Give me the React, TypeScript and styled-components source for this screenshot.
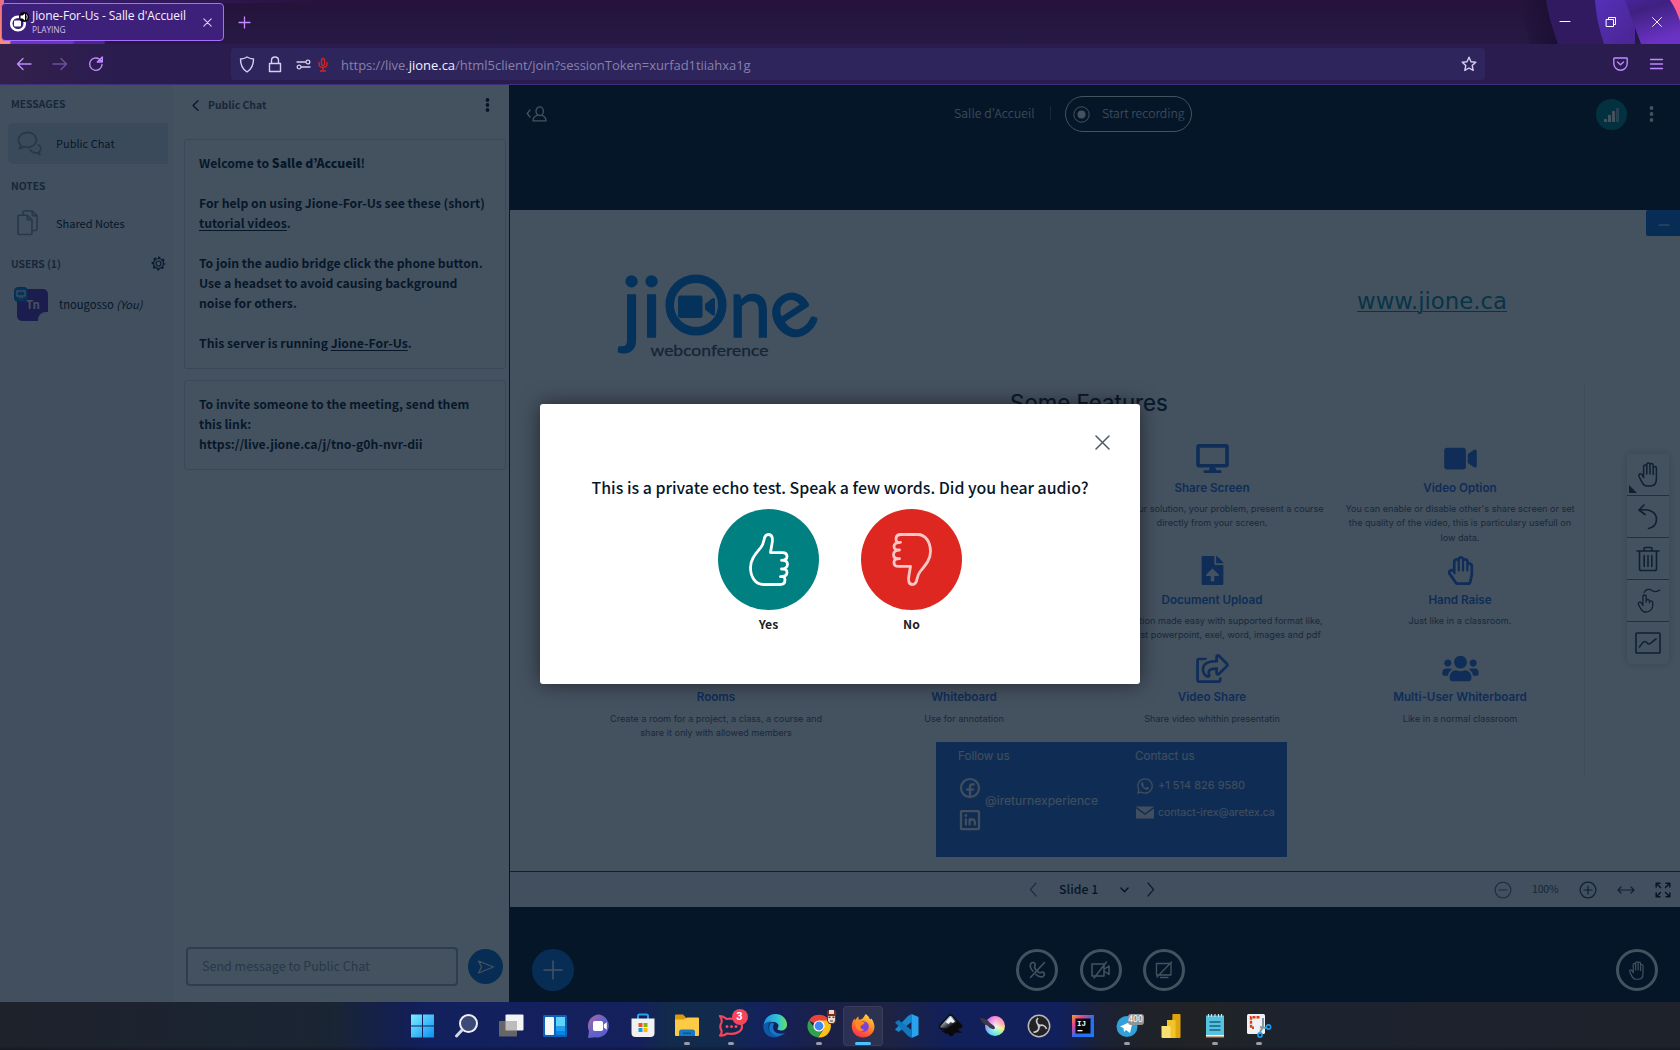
import React from "react";
import styled, { createGlobalStyle, css } from "styled-components";
import { FaDesktop, FaVideo, FaFileUpload, FaRegHandPaper, FaRegShareSquare, FaUsers, FaWhatsapp } from "react-icons/fa";
import { PiHandPointing, PiFacebookLogoBold, PiLinkedinLogoBold } from "react-icons/pi";

const chrome = '"Open Sans", "Noto Sans", sans-serif';
const ui = '"Noto Sans CJK JP", "Noto Sans", sans-serif';
const inter = 'Inter, "Liberation Sans", sans-serif';

const Global = createGlobalStyle`
  * { box-sizing: border-box; }
  html, body { margin: 0; padding: 0; overflow: hidden; background: #06172a; }
  svg { display: block; flex: none; overflow: visible; }
`;

const Screen = styled.div`
  width: 1680px; height: 1050px; overflow: hidden;
  display: grid; grid-template-rows: 44px 41px 917px 48px;
  font-family: ${ui};
`;

/* ---------- browser chrome ---------- */
const TabStrip = styled.div`
  position: relative; display: flex; align-items: flex-start; padding: 3px 0 0 1px;
  background:
    linear-gradient(100deg, #ff8a72 0 11px, #6a35c8 13px 73px, #4a2795 76px 104px, transparent 106px) 0 100% / 140px 12px no-repeat,
    linear-gradient(#ee6f7d, #ff8a72) 0 0 / 4px 41px no-repeat,
    linear-gradient(90deg, #3d1e7a, transparent) 0 0 / 330px 3px no-repeat,
    linear-gradient(#26123a, #251a45);
`;
const StripArt = styled.svg`position: absolute; right: 0; top: 0;`;
const Tab = styled.div`
  width: 223px; height: 38px; display: flex; align-items: center; padding: 0 11px 0 7px;
  background: #3d2079; border: 1px solid #a86dff; border-radius: 4px; color: #f4f0ff;
  font-family: ${chrome};
`;
const TabText = styled.div`
  flex: 1; margin-left: 3px; white-space: nowrap;
  font-size: 12px; line-height: 15px; letter-spacing: -0.09px;
  small { display: block; font-size: 8.4px; line-height: 13px; letter-spacing: -0.1px; color: #cdbff0; }
`;
const NewTab = styled.div`margin: 13px 0 0 14px;`;
const WindowControls = styled.div`
  position: relative; margin-left: auto; display: flex; margin-top: -3px;
`;
const WindowButton = styled.div`width: 46px; height: 44px; display: grid; place-items: center;`;

const NavBar = styled.div`
  display: flex; align-items: center; background: linear-gradient(90deg, #33204c, #2a1c4f 120px);
  border-bottom: 1px solid #40307a; padding-left: 6px; font-family: ${chrome};
`;
const NavButton = styled.div<{ $dim?: boolean }>`
  width: 36px; height: 32px; display: grid; place-items: center; opacity: ${p => (p.$dim ? 0.45 : 1)};
`;
const UrlField = styled.div`
  width: 1254px; height: 32px; margin-left: 117px; background: #2d255b; border-radius: 4px;
  display: flex; align-items: center; padding: 0 7px 0 7px; color: #8980ac;
  font-size: 13px; letter-spacing: -0.03px; white-space: pre;
  b { font-weight: 400; color: #f4f0ff; }
`;
const UrlIcon = styled.div<{ $w: number }>`width: ${p => p.$w}px; display: grid; place-items: center; color: #d8cef5;`;
const UrlText = styled.span`flex: 1; margin-left: 7px; padding-top: 2px;`;
const NavEnd = styled.div`margin-left: auto; margin-right: 6px; display: flex;`;

/* ---------- conference client ---------- */
const Client = styled.div`position: relative; display: grid; grid-template-columns: 173px 336px 1fr; min-height: 0;`;

const Sidebar = styled.aside`background: #f3f6f9; padding: 0 5px 0 8px; color: #06172a;`;
const SectionTitle = styled.div<{ $mt: number }>`
  margin-top: ${p => p.$mt}px; padding: 0 2px 0 3px; height: 18px; display: flex; justify-content: space-between; align-items: center;
  font-size: 10.3px; font-weight: 700; color: #4e5a66;
`;
const SideItem = styled.div<{ $active?: boolean; $mt: number }>`
  margin-top: ${p => p.$mt}px; height: 41px; display: flex; align-items: center; padding-left: 9px;
  border-radius: 5px 0 0 5px; font-size: 11px; font-weight: 400;
  ${p => p.$active && css`background: #dce4ed;`}
  svg { margin-right: 14px; }
  span { padding-bottom: 2px; }
`;
const UserRow = styled.div`
  height: 41px; margin-top: 12px; display: flex; align-items: center; padding-left: 9px; font-size: 11.2px;
  span { padding-bottom: 2px; }
  em { font-size: 11px; }
`;
const Avatar = styled.div`
  position: relative; width: 31px; height: 32px; margin-right: 11px; border-radius: 5px; background: #5a30b8;
  display: grid; place-items: center; color: #fff; font-size: 11.5px; font-weight: 700; padding: 0 0 2px 1px;
  &::after { content: ""; position: absolute; right: 0; bottom: 0; width: 10px; height: 9px; background: #f3f6f9; border-top-left-radius: 8px; }
`;
const PresenterBadge = styled.i`
  position: absolute; left: -3px; top: -2px; width: 14px; height: 15px; border-radius: 4px; background: #0f86e8;
  display: grid; place-items: center; border: 1px solid #0f70d7;
`;

const Chat = styled.section`background: #fff; display: flex; flex-direction: column; color: #06172a;`;
const ChatHeader = styled.div`
  height: 40px; display: flex; align-items: center; padding: 0 19px 0 19px; font-size: 10.4px; font-weight: 700; color: #4e5a66;
  span { flex: 1; margin-left: 9px; padding-bottom: 2px; }
`;
const Messages = styled.div`flex: 1; margin: 14px 3px 0 11px; display: flex; flex-direction: column; gap: 11px;`;
const Message = styled.div`
  border: 1px solid #d0dae4; border-radius: 3px; padding: 13px 14px 15px; background: #fff;
  font-size: 12.22px; line-height: 20px; font-weight: 700; white-space: nowrap; color: #0b1a28;
  u { text-underline-offset: 2px; }
  b { font-weight: 900; }
`;
const ChatForm = styled.div`display: flex; align-items: center; padding: 0 6px 16px 13px; gap: 10px;`;
const ChatInput = styled.div`
  width: 272px; height: 39px; border: 2px solid #a1aebc; border-radius: 4px; padding: 0 14px;
  font-size: 12.5px; line-height: 34px; color: #8b9aa8; background: #fff;
`;
const Round = styled.div<{ $size: number; $bg?: string; $ring?: boolean }>`
  width: ${p => p.$size}px; height: ${p => p.$size}px; border-radius: 50%; flex: none;
  display: grid; place-items: center; background: ${p => p.$bg || "transparent"};
  ${p => p.$ring && css`border: 3px solid #fff;`}
`;

const Main = styled.main`
  background: #06172a; border-left: 1px solid #06172a; min-width: 0; color: #fff;
  display: grid; grid-template-rows: 125px 661px 36px 95px;
`;
const TopBar = styled.header`
  height: 58px; display: flex; align-items: center; padding: 0 26px 0 16px; font-size: 12.3px; font-weight: 300;
`;
const MeetingTitle = styled.span`margin-left: 407px; margin-bottom: 2px; width: 96px; white-space: nowrap; letter-spacing: 0.1px;`;
const Divider = styled.i`width: 1px; height: 14px; background: #4e5a66; margin-right: 14px; margin-bottom: 2px;`;
const RecordButton = styled.div`
  width: 127px; height: 36px; border: 1px solid #fff; border-radius: 18px; display: flex; align-items: center;
  padding-left: 7px; white-space: nowrap;
  span { margin-left: 12px; padding-bottom: 2px; letter-spacing: 0.04px; }
`;
const TopEnd = styled.div`margin-left: auto; display: flex; align-items: center; gap: 22px;`;

const Presentation = styled.div`
  background: #fff; position: relative; color: #57606b; padding-left: 82px; font-family: ${inter};
`;
const MinimizeButton = styled.div`
  position: absolute; right: 0; top: 0; width: 34px; height: 26px; background: #0f70d7; border-radius: 2px 0 0 2px;
  display: grid; place-items: center; padding: 3px 0 0 2px;
`;
const SlideHeader = styled.div`height: 173px; width: 992px; display: flex; padding: 60px 77px 0 24px; justify-content: space-between;`;
const SiteLink = styled.a`font: 22.8px/30px "DejaVu Sans", sans-serif; color: #0a8f9b; text-decoration: underline; margin-top: 16px; text-underline-offset: 2px; text-decoration-thickness: 1px;`;
const Features = styled.div`width: 993px; height: 393px; border-right: 1px solid #e3e8ec;`;
const FeaturesTitle = styled.div`height: 38px; padding-left: 2px; line-height: 39px; text-align: center; font-size: 22.3px; font-weight: 400; color: #16202c; -webkit-text-stroke: 0.2px #16202c;`;
const FeatureGrid = styled.div`padding-top: 23px; display: grid; grid-template-columns: repeat(4, 248px); grid-template-rows: 112px 97.5px 100px;`;
const FeatureCell = styled.div`
  display: flex; flex-direction: column; align-items: center; text-align: center;
  font-size: 9.12px; line-height: 14.3px; white-space: nowrap;
`;
const FeatureIcon = styled.div`
  height: 29px; color: #2c70de; display: grid; place-items: center;
  svg { height: 29px; width: 37px; }
`;
const FeatureName = styled.div`font-size: 11.65px; line-height: 16px; font-weight: 600; color: #2c70de; margin: 6.5px 0 6.5px;`;
const Footer = styled.div`
  width: 351px; height: 115px; margin: -34px 0 0 344px; position: relative; background: #2f70d4; color: #eef2f6;
  display: grid; grid-template-columns: 177px 1fr; padding: 5px 0 0 22px; white-space: nowrap; align-items: start;
`;
const FooterTitle = styled.div<{ $h: number }>`font-size: 11.65px; line-height: 18px; height: ${p => p.$h}px;`;
const Social = styled.div`
  display: flex; align-items: center; font-size: 12.15px; gap: 3px;
  div { display: grid; gap: 8px; }
  span { padding-bottom: 7px; }
`;
const Contact = styled.div<{ $size: number }>`
  display: flex; align-items: center; gap: 3px; height: 27px; font-size: ${p => p.$size}px;
  svg { width: 20px; }
  span { padding-bottom: 1px; }
`;

const Tools = styled.div`
  position: absolute; right: 11px; top: 244px; width: 42px; height: 210px; background: #fff; border-radius: 5px;
  box-shadow: 0 0 8px rgba(0, 0, 0, 0.22); color: #2e3d4d;
`;
const Tool = styled.div`
  position: relative; height: 42px; display: grid; place-items: center;
  &:not(:last-child) { border-bottom: 1px solid #6d7c8b; }
`;
const Corner = styled.i`position: absolute; left: 2px; bottom: 2px; border-left: 8px solid #2e3d4d; border-top: 8px solid transparent;`;

const SlideBar = styled.div`
  background: #f3f6f9; border-top: 1px solid #35424f; color: #06172a; display: flex; align-items: center;
  padding: 0 9px 0 519px; font-size: 12.3px; font-weight: 500;
`;
const SlideLabel = styled.span`margin-left: 22px; width: 61px; padding-bottom: 2px;`;
const Zoom = styled.div`
  margin-left: auto; display: flex; align-items: center; color: #2e3d4d;
  span { font-size: 10.4px; font-weight: 400; width: 26px; margin: 0 21px 0 20px; padding-bottom: 2px; color: #4e5a66; letter-spacing: -0.1px; }
`;
const ActionBar = styled.div`display: grid; grid-template-columns: 484px auto 1fr; align-items: center; padding: 31px 22px 0; `;
const ActionGroup = styled.div<{ $end?: boolean }>`display: flex; gap: 21.5px; justify-content: ${p => (p.$end ? "flex-end" : "flex-start")};`;

const Overlay = styled.div`
  position: absolute; inset: 0; background: rgba(6, 23, 42, 0.75); display: flex; align-items: center; justify-content: center; padding-top: 1px;
`;
const Modal = styled.div`
  width: 600px; height: 280px; background: #fff; border-radius: 3px; box-shadow: 0 0 20px rgba(0, 0, 0, 0.5);
  display: flex; flex-direction: column; align-items: center; color: #06172a;
`;
const ModalHeader = styled.div`align-self: stretch; height: 72px; display: flex; justify-content: flex-end; padding: 31px 30.5px 0 0;`;
const Question = styled.h1`margin: 0; font-size: 15.9px; line-height: 24px; font-weight: 500; white-space: nowrap; color: #06172a;`;
const Answers = styled.div`display: flex; gap: 42px; margin-top: 9px;`;
const Answer = styled.div`
  display: flex; flex-direction: column; align-items: center; font-size: 12.2px; font-weight: 700; line-height: 20px; color: #222;
  span { margin-top: 4px; }
`;

/* ---------- taskbar ---------- */
const Taskbar = styled.div`
  display: flex; justify-content: center; padding-left: 1px;
  background:
    linear-gradient(transparent 44px, rgba(0, 0, 10, 0.3)),
    linear-gradient(90deg, #1e222b 0, #1c2431 200px, #1a2533 330px, #131f52 400px, #12205e 430px, #14215c 640px, #122a4b 668px,
      #122a4b 720px, #13225c 760px, #1b2046 830px, #1d2343 890px, #11205a 950px, #11205c 1060px, #1b2136 1100px, #1f2228 1150px, #212326 1210px, #1c232f 1290px, #1f222b 1680px);
`;
const TaskItem = styled.div<{ $state?: "running" | "active" }>`
  position: relative; width: 40px; height: 40px; margin: 4px 2px; border-radius: 4px; display: grid; place-items: center;
  ${p => p.$state === "active" && css`background: rgba(255, 255, 255, 0.07); box-shadow: inset 0 0 0 1px rgba(255, 255, 255, 0.06);`}
  ${p => p.$state && css`
    &::after {
      content: ""; position: absolute; bottom: 1px; left: 50%; transform: translateX(-50%); height: 3px; border-radius: 2px;
      width: ${p.$state === "active" ? 16 : 6}px; background: ${p.$state === "active" ? "#4cc2ff" : "#9a9ca6"};
    }`}
`;
const CountBadge = styled.span`
  position: absolute; right: 3px; top: 3px; width: 16px; height: 16px; border-radius: 50%; background: #f5455c; color: #fff;
  font: 700 11px/16px Roboto, sans-serif; text-align: center;
`;
const TagBadge = styled.span`
  position: absolute; right: 3px; top: 8px; width: 16px; height: 11px; border-radius: 3px; background: #8f9496; color: #fff;
  font: 400 8.5px/11px Roboto, sans-serif; text-align: center;
`;

const Line = ({ w, h, d, c = "currentColor", s = 1.3, vb }: { w: number; h: number; d: string; c?: string; s?: number; vb?: string }) => (
  <svg width={w} height={h} viewBox={vb || `0 0 ${w} ${h}`} fill="none" stroke={c} strokeWidth={s} strokeLinecap="round" strokeLinejoin="round"><path d={d} /></svg>
);
const Kebab = ({ c, h = 14 }: { c: string; h?: number }) => (
  <svg width="5" height={h} viewBox={`0 0 5 ${h}`} fill={c}><circle cx="2.5" cy="2" r="1.9" /><circle cx="2.5" cy={h / 2} r="1.9" /><circle cx="2.5" cy={h - 2} r="1.9" /></svg>
);
const Gear = () => (
  <svg width="15" height="15" viewBox="0 0 15 15" fill="none" stroke="#1c2b3b">
    <circle cx="7.5" cy="7.5" r="6.1" strokeWidth="1.600" strokeDasharray="2.300 2.490" strokeDashoffset="1.150" />
    <circle cx="7.5" cy="7.5" r="5" strokeWidth="1.200" />
    <circle cx="7.5" cy="7.5" r="2.5" strokeWidth="1.200" />
  </svg>
);
const Palm = ({ h }: { h: number }) => (
  <Line w={h * 0.84} h={h} vb="0 0 21 25" s={1.5} d="M5.600 15.500V4.700a1.600 1.600 0 0 1 3.200 0V12V2.600a1.600 1.600 0 0 1 3.200 0V12V3a1.600 1.600 0 0 1 3.200 0V12.500V6.200a1.600 1.600 0 0 1 3.200 0V17q0 7-6 7h-3.400q-3 0-4.500-2.800L1.200 14.800c-.7-1.500-.3-2.400.6-2.800 1-.4 1.800 0 2.400 1z" />
);
const Thumb = ({ down }: { down?: boolean }) => (
  <svg width="40" height="53" viewBox="0 0 40 53" fill="none" stroke="#fff" strokeOpacity={down ? 0.75 : 1} strokeWidth="2.8" strokeLinejoin="round" strokeLinecap="round">
    <path transform={down ? "rotate(180 20 26.5)" : undefined} d="M19.500 1.500c-3 0-4 2.200-4.500 5.500-.7 3.500-1.200 5-3.200 7.500C7 20.500 1.500 26 1.500 34.500c0 9 4.500 17 13 17H31c3.500 0 5-1.200 5-4.500 0-1.600-.5-2.800-1.500-3.300h-3c3 0 6.500-1 6.500-4.200 0-2-1.500-3.500-3-3.500h-2.500c3 0 6-1.500 6-4.500s-2-4.200-4.500-4.200h-1.500c2.500 0 5.500-1 5.500-3.700 0-2.600-1.800-4-4.500-4H21.500l1.600-9.300c.8-4.400.4-8.800-3.600-8.800Z" />
  </svg>
);
const Logo = () => (
  <svg width="202" height="92" viewBox="0 0 202 92" fill="#0482ee">
    <g fontFamily="Lato, sans-serif" fontSize="84" stroke="#0482ee" strokeWidth="1.6" textAnchor="middle">
      <text x="15.500" y="67">j</text>
      <text x="35.500" y="67">i</text>
      <text transform="translate(134 67) scale(0.9 1)">n</text>
      <text transform="translate(176.500 45) rotate(-33) translate(0 22)">e</text>
    </g>
    <circle cx="80" cy="35" r="26.300" fill="none" stroke="#0482ee" strokeWidth="8.600" />
    <rect x="62" y="25.500" width="24.500" height="22.500" rx="2.500" />
    <path d="M89 34l7-5.500q3-1.500 3 1v14.500q0 2.500-3 1l-7-5.500z" />
    <text x="93.500" y="86" textAnchor="middle" fontFamily="Lato, sans-serif" fontSize="15.500" textLength="118" lengthAdjust="spacingAndGlyphs" fill="#4a5058" stroke="#4a5058" strokeWidth="0.300">webconference</text>
  </svg>
);

const features: { icon?: React.ReactNode; name?: string; lines?: string[] }[] = [
  {}, {},
  { icon: <FaDesktop />, name: "Share Screen", lines: ["Share your solution, your problem, present a course", "directly from your screen."] },
  { icon: <FaVideo />, name: "Video Option", lines: ["You can enable or disable other's share screen or set", "the quality of the video, this is particulary usefull on", "low data."] },
  {}, {},
  { icon: <FaFileUpload />, name: "Document Upload", lines: ["Presentation made easy with supported format like,", "your latest powerpoint, exel, word, images and pdf"] },
  { icon: <FaRegHandPaper />, name: "Hand Raise", lines: ["Just like in a classroom."] },
  { name: "Rooms", lines: ["Create a room for a project, a class, a course and", "share it only with allowed members"] },
  { name: "Whiteboard", lines: ["Use for annotation"] },
  { icon: <FaRegShareSquare />, name: "Video Share", lines: ["Share video whithin presentatin"] },
  { icon: <FaUsers />, name: "Multi-User Whiterboard", lines: ["Like in a normal classroom"] },
];

const S = ({ children }: { children: React.ReactNode }) => <svg width="26" height="26" viewBox="0 0 26 26">{children}</svg>;

const ProfileBadge = styled.svg`position: absolute; right: 2px; top: 3px;`;
const KritaDisc = styled.div`
  width: 20px; height: 20px; border-radius: 50%; position: relative; margin: 0 0 0 1px;
  background: radial-gradient(circle, #ffffffcc, transparent 65%), conic-gradient(#f58bd0, #f9a0a8 70deg, #f5ee7a 110deg, #7ff0b0 150deg, #4ee0f5 200deg, #8a9cf5 260deg, #e070e8 320deg, #f58bd0);
  svg { position: absolute; left: -6px; top: 0; }
`;
const FaceBadge = () => (
  <ProfileBadge width="11" height="15" viewBox="0 0 11 15"><path fill="#7e2a22" d="M1 2q4.500-3 9 0v10l-2 3H3l-2-3z" /><path fill="#e5dccb" d="M3 1h5v4H3zM2 7h7v5l-1.500 2h-4L2 12z" /><path fill="#5b3b2c" d="M2.500 7.500h2v1.500h-2zM6.500 7.500h2v1.500h-2zM4 11.500h3v1H4z" /></ProfileBadge>
);
const KritaIcon = () => (
  <KritaDisc><svg width="20" height="18" viewBox="0 0 20 18"><path fill="#3a3a42" d="M1 2c4-.5 8 2 10 5 2.500 1.500 4.500 3 5 4.500 0 1.500-1.500 2-2.500 1.500-2-.5-4-2-5-3.500C5 8.500 2 5.500 1 2z" /></svg></KritaDisc>
);

const tasks: { icon: React.ReactNode; state?: "running" | "active"; badge?: React.ReactNode }[] = [
  { icon: <S><defs><linearGradient id="win" x2="1" y2="1"><stop stopColor="#7df0ff" /><stop offset="1" stopColor="#0a8ef5" /></linearGradient></defs><path fill="url(#win)" d="M1 1.500h11v11H1zM13 1.500h11v11H13zM1 13.500h11v11H1zM13 13.500h11v11H13z" /></S> },
  { icon: <S><circle cx="14.500" cy="10.500" r="8.500" fill="#3c4878" stroke="#eef0f6" strokeWidth="2" /><path d="M8.300 16.800L2.500 23" stroke="#d4d8e2" strokeWidth="3" strokeLinecap="round" /></S> },
  { icon: <S><rect x="7.500" y="1.500" width="18" height="16" rx="1" fill="#f4f4f4" /><rect x="1" y="8" width="18" height="15.500" rx="1" fill="#666" /><path d="M7.500 8h11.500v9.500H7.500z" fill="#bcbcbc" /></S> },
  { icon: <S><rect x="1" y="2" width="24" height="22" rx="1.500" fill="#0b63b8" /><rect x="3" y="4" width="9" height="18" rx="1" fill="#f6f6f6" /><path fill="#5fd3fb" d="M14 4h9v9.500h-9z" /><path fill="#1aa0f5" d="M14 14h9v4h-9z" /><path fill="#0a84e4" d="M14 18h9v4h-9z" /></S> },
  { icon: <S><defs><linearGradient id="tm" x2="1" y2="1"><stop stopColor="#b0699b" /><stop offset=".5" stopColor="#6463c9" /><stop offset="1" stopColor="#5a58cf" /></linearGradient></defs><path fill="url(#tm)" d="M13.500 1.500A11.500 11.500 0 1 1 9 24.200L2 25l1-7A11.500 11.500 0 0 1 13.500 1.500z" /><rect x="7" y="8" width="10" height="10" rx="1.800" fill="#fff" /><path fill="#fff" d="M17.800 11.500l3-2.200v7.400l-3-2.200z" /></S> },
  { icon: <S><path d="M8 6V3q0-1.500 1.500-1.500h7Q18 1.500 18 3v3" fill="none" stroke="#21a5ee" strokeWidth="2" /><path fill="#f1f1f1" d="M1.500 5.500h23V20q0 4-4 4h-15q-4 0-4-4z" /><path fill="#f25022" d="M8.500 10h4v4h-4z" /><path fill="#7fba00" d="M13.500 10h4v4h-4z" /><path fill="#00a4ef" d="M8.500 15h4v4h-4z" /><path fill="#ffb900" d="M13.500 15h4v4h-4z" /></S> },
  { state: "running", icon: <S><path fill="#d99a0b" d="M1 2.500q0-1 1-1h7l3 3v5H1z" /><path fill="#fdca45" d="M1 6.500h9l3-2h11q1 0 1 1V22q0 1-1 1H2q-1 0-1-1z" /><path fill="#1778c4" d="M5 23v-4q0-2.500 2.500-2.500h11Q21 16.500 21 19v4z" /><path fill="#0c5796" d="M9 19.500h8v1.500H9z" /></S> },
  { state: "running", badge: <CountBadge>3</CountBadge>, icon: <S><path fill="none" stroke="#f5455c" strokeWidth="2.200" strokeLinejoin="round" d="M2 3c3 0 5 1.500 6.500 3 8-1.500 15.500 2 15.500 7.500S16.500 22 9 20.500C7 22 4.500 22.800 2 22.500c1.500-1.500 2-3 1.500-5C2 15 2 12 3.500 9.500 4 7 3.500 5 2 3z" /><g fill="#f5455c"><circle cx="9" cy="13.500" r="1.500" /><circle cx="13.500" cy="13.500" r="1.500" /><circle cx="18" cy="13.500" r="1.500" /></g></S> },
  { icon: <S><defs><linearGradient id="ed" x2="1"><stop stopColor="#1b8ee0" /><stop offset=".6" stopColor="#2fc4d8" /><stop offset="1" stopColor="#6be064" /></linearGradient></defs><path fill="url(#ed)" d="M1.500 12C2.500 5 7.500 1 13.500 1 20 1 25 6 25 11.500c0 4-3 6-6 6-2 0-3.500-.7-3.500-1.700 0-.8 1-1.300 1-3 0-2-2-3.800-5-3.800-4 0-8 1-10 3z" /><path fill="#0c5aa8" d="M1.200 13C2 10 5.500 8.500 9 8.500c-2.500 2-3 4.500-2.300 7.500 1.500 5.500 7 8 12.800 6-7 5.500-18.500 1.500-18.300-9z" /><path fill="#1376cc" d="M9 10c-3 3-2.500 9 2.500 12 4 2 8 1 11.500-2-6 2-12-.5-12-6 0-1.500.5-2.500 1.500-3.200C11.500 10 10 9.700 9 10z" /></S> },
  { state: "running", badge: <FaceBadge />, icon: <S><path fill="#e8443a" d="M13 13L3 7.500A11.500 11.500 0 0 1 23 7.500z" /><path fill="#2fa14f" d="M3 7.200A11.500 11.500 0 0 0 12 24.500L17.500 15l-9 0z" /><path fill="#fbc116" d="M12 24.500A11.500 11.500 0 0 0 23.300 7.500H13l5 8z" /><circle cx="13" cy="13" r="5.600" fill="#fff" /><circle cx="13" cy="13" r="4.400" fill="#4285f4" /></S> },
  { state: "active", icon: <S><defs><linearGradient id="ff" x1=".7" x2=".2" y2="1"><stop stopColor="#ffd63d" /><stop offset=".5" stopColor="#ff7a26" /><stop offset="1" stopColor="#f5285c" /></linearGradient></defs><path fill="url(#ff)" d="M15.500 1c2 1 4 3.500 4.500 5.500l1.500-1c3 4.500 3.500 8 2.500 11.500-1.500 4.500-6 7.500-11 7.500C6.500 24.500 1.500 19.500 1.800 13c0-3 1-5.500 2.700-7.500l.5 2c1-2 2-3 3.500-4v3c1.500 0 3 .3 4.500-1.500 1-1.500 2-2.500 2.500-4z" /><circle cx="13.500" cy="13.500" r="5.300" fill="#7b42d6" /><path fill="#ff8b22" d="M5 9c2-2 5-1.500 6.500-.5 1.500.8 3 .3 3 1.500S11 12 10.500 13.500s1.500 3.500 4 3C12 19.500 5 18 5 9z" /></S> },
  { icon: <S><path fill="#1b86cf" d="M17.500 1v8L4.500 19 1 16.500 14 3z" /><path fill="#2aa3ee" d="M17.500 25l7-3V4l-7-3z" /><path fill="#1077bd" d="M1 9.500L4.500 7l13 10v8L14 23z" /></S> },
  { icon: <S><defs><linearGradient id="ink" x2=".7" y2="1"><stop stopColor="#dfe6f2" /><stop offset=".35" stopColor="#8b95a5" /><stop offset=".62" stopColor="#0a0a0a" /></linearGradient></defs><path fill="url(#ink)" stroke="#0a0a0a" strokeWidth="1.300" d="M12.500 2q1.200 0 2 1l9 9.500c1.500 2-1 2.500-3.500 2.500-2 0-1.500 1.500 0 2 1 .5 1.500 1.500 0 2h-3.500c-.5 1-1 3.500-3 3.500s-3-1-2-2.500H8c-2-.5-2-2 0-2.500 1-.5 0-1.500-2.500-1.500-3 0-5-1.500-3.500-3.500L10.500 3q.8-1 2-1z" /><path fill="#eef3fb" d="M12.500 3.500l4.500 5-2 1.500-2.500-1-2 2-3-2z" /><path fill="#0a0a0a" d="M21 18.500h2.500v1.200H21zM4 17.500h2v1.200H4z" /></S> },
  { icon: <KritaIcon /> },
  { icon: <S><circle cx="13" cy="13" r="10.700" fill="#232326" stroke="#b9b9bd" strokeWidth="1.500" /><path d="M12 5c-2.500 2.500-1.500 6 1.500 7.500M20.500 16c-1-3-4-4.500-7-3.500M7.500 19c3.500.5 6-2 5.500-6.500" fill="none" stroke="#c9c9cc" strokeWidth="1.700" /><circle cx="13" cy="13" r="1.500" fill="#c9c9cc" /></S> },
  { icon: <S><defs><linearGradient id="ij" x2="1" y2="1"><stop stopColor="#f5a02b" /><stop offset=".25" stopColor="#e8458b" /><stop offset=".55" stopColor="#2a6cf0" /><stop offset="1" stopColor="#1a7cf5" /></linearGradient></defs><rect x="2" y="2" width="22" height="22" fill="url(#ij)" /><rect x="5.500" y="5.500" width="15" height="15" fill="#050508" /><text x="7" y="13" fontSize="7.500" fontWeight="700" fontFamily="Liberation Mono, monospace" fill="#fff">IJ</text><path fill="#fff" d="M7.500 17h5v1.300h-5z" /></S> },
  { state: "running", badge: <TagBadge>400</TagBadge>, icon: <S><circle cx="13" cy="13.500" r="10.500" fill="#2fa2dc" /><path fill="#fff" d="M6 13.500l13-6-3 12.500-4-3-2 2-.5-4z" /></S> },
  { icon: <S><path fill="#e0a50c" d="M14.500 1h7q1 0 1 1v22q0 1-1 1h-8z" /><path fill="#f2c42c" d="M9 7h7.500q1 0 1 1v17H9z" /><path fill="#fae06f" d="M3.500 13h8q1 0 1 1v11h-8q-1 0-1-1z" /></S> },
  { state: "running", icon: <S><path fill="#57c2dd" d="M4 2.500h18V22H4z" /><path fill="#fff" d="M4 22h18v2H4z" /><path fill="#a3511e" d="M4 23.500h18V25H4z" /><path stroke="#126387" strokeWidth="1.500" d="M7.500 9h11M7.500 13h11M7.500 17h11" /><path stroke="#bfe9f4" strokeWidth="1.200" d="M6.500 1v3M9.500 1v3M13 1v3M16.500 1v3M19.500 1v3" /></S> },
  { state: "running", icon: <S><rect x="1" y="1" width="18" height="20" rx="1.500" fill="#eef2f5" /><path fill="none" stroke="#d8401a" strokeWidth="2.400" strokeDasharray="3 1" d="M13.500 4.200H5v10.500h3" /><path d="M17 5v9l-3 5M14 14l6 1" stroke="#8c949c" strokeWidth="2" fill="none" /><circle cx="22.500" cy="14" r="2.100" fill="none" stroke="#1b9cf0" strokeWidth="1.600" /><circle cx="14" cy="22" r="2.100" fill="none" stroke="#1b9cf0" strokeWidth="1.600" /></S> },
];

const PointerIcon = styled.div`
  width: 26px; height: 26px; display: grid; align-items: end;
  svg { grid-area: 1 / 1; }
  svg:last-child { align-self: start; margin-left: 8px; }
`;
const NextWrap = styled.div`margin-left: 18px;`;
const FitWrap = styled.div`margin: 0 20px 0 20px;`;

export default function App() {
  return (
    <Screen>
      <Global />
      <TabStrip>
        <StripArt width="170" height="44" viewBox="0 0 170 44">
          <defs>
            <linearGradient id="sh"><stop stopColor="#1a0d30" stopOpacity="0" /><stop offset="1" stopColor="#1c0f33" /></linearGradient>
            <linearGradient id="p3" x2="0.400" y2="1"><stop stopColor="#47249a" /><stop offset="0.300" stopColor="#3f2180" /><stop offset="1" stopColor="#6a32c4" /></linearGradient>
            <linearGradient id="p2" y2="1"><stop stopColor="#5430b8" /><stop offset="1" stopColor="#4a2592" /></linearGradient>
          </defs>
          <path fill="url(#sh)" d="M8 0h28l12 44H20z" />
          <path fill="#321a60" d="M36 0h60v44H48Q39 20 36 0z" />
          <path fill="url(#p2)" d="M85 0h40v44H94Q86 20 85 0z" />
          <path fill="url(#p3)" d="M115 0h55v44h-39z" />
          <path fill="#ff5f8f" d="M160 0h10v21q-4-12-10-21z" />
        </StripArt>
        <Tab>
          <svg width="20" height="22" viewBox="0 0 20 22"><circle cx="9" cy="12.500" r="6.800" fill="none" stroke="#fff" strokeWidth="2.600" /><rect x="5" y="9.500" width="7" height="6" rx="1" fill="#fff" /><circle cx="15" cy="6" r="5" fill="#000" /><path fill="#fff" d="M11.500 4.500h2l2.500-2v7l-2.500-2h-2z" /><path d="M17.500 3.500q1.500 2.500 0 5" stroke="#ddd" fill="none" /></svg>
          <TabText>Jione-For-Us - Salle d'Accueil<small>PLAYING</small></TabText>
          <Line w={9} h={9} d="M.8.8l7.400 7.400M8.200.8L.8 8.200" c="#d8cef5" s={1.1} />
        </Tab>
        <NewTab><Line w={13} h={13} d="M6.500 1v11M1 6.500h11" c="#c08bff" s={1.3} /></NewTab>
        <WindowControls>
          <WindowButton><Line w={10} h={10} d="M0 4.500h10" c="#fff" s={1} /></WindowButton>
          <WindowButton><Line w={10} h={10} d="M.5 2.500h7v7h-7zM2.500 2.500v-2h7v7h-2" c="#fff" s={1} /></WindowButton>
          <WindowButton><Line w={10} h={10} d="M.5.5l9 9M9.500.5l-9 9" c="#fff" s={0.9} /></WindowButton>
        </WindowControls>
      </TabStrip>

      <NavBar>
        <NavButton><Line w={16} h={14} d="M15 7H1.500M7 1.500L1.500 7L7 12.500" c="#c08bff" s={1.4} /></NavButton>
        <NavButton $dim><Line w={16} h={14} d="M1 7h13.500M9 1.500L14.500 7L9 12.500" c="#c08bff" s={1.4} /></NavButton>
        <NavButton><Line w={16} h={16} d="M14 8.500A6.200 6.200 0 1 1 11.500 3.200L14 5.500M14.300 1v5h-5z" c="#c08bff" s={1.4} /></NavButton>
        <UrlField>
          <UrlIcon $w={18}><Line w={16} h={17} d="M8 1q3.500 2 6.500 2c0 6-1.500 10-6.500 13C3 13 1.500 9 1.500 3Q5 3 8 1z" s={1.4} /></UrlIcon>
          <UrlIcon $w={38}><Line w={14} h={17} d="M1.500 7.500h11v8h-11zM3.500 7.500v-3q0-3.500 3.500-3.500t3.500 3.500v3" s={1.4} /></UrlIcon>
          <UrlIcon $w={18}><Line w={15} h={11} d="M1 3h8M6 8h8M13.800 3a1.900 1.900 0 1 1-3.800 0a1.900 1.900 0 1 1 3.800 0M5 8a1.900 1.900 0 1 1-3.800 0a1.900 1.900 0 1 1 3.800 0" s={1.3} /></UrlIcon>
          <UrlIcon $w={22}><Line w={10} h={15} d="M3.500 3a1.500 1.500 0 0 1 3 0v4a1.500 1.500 0 0 1-3 0zM1 5.500v1.300q0 3.500 4 3.500t4-3.500V5.500M5 10.500V14M2.500 14h5" c="#e0221e" s={1.3} /></UrlIcon>
          <UrlText>https://live.<b>jione.ca</b>/html5client/join?sessionToken=xurfad1tiiahxa1g</UrlText>
          <UrlIcon $w={18}><Line w={16} h={16} d="M8 1.200l2 4.500 4.800.5-3.600 3.300 1 4.900L8 12l-4.200 2.400 1-4.900L1.200 6.200l4.800-.5z" s={1.4} /></UrlIcon>
        </UrlField>
        <NavEnd>
          <NavButton><Line w={15} h={14} d="M1.500 1h12q.7 0 .7.700V6.500a6.700 6.700 0 0 1-13.400 0V1.700Q.8 1 1.500 1zM4.500 5l3 2.800 3-2.800" c="#c08bff" s={1.4} /></NavButton>
          <NavButton><Line w={13} h={12} d="M.5 1.500h12M.5 6h12M.5 10.500h12" c="#c08bff" s={1.3} /></NavButton>
        </NavEnd>
      </NavBar>

      <Client>
        <Sidebar>
          <SectionTitle $mt={9}>MESSAGES</SectionTitle>
          <SideItem $active $mt={11}>
            <Line w={25} h={25} d="M10.500 1.500c5 0 9 3.200 9 7.300s-4 7.500-9 7.500c-1.500 0-2.700-.3-3.800-.8-1.200 1.200-2.500 1.800-4.200 2.200.9-1.200 1.200-2.300 1.200-3.700C2.300 12.600 1.300 10.800 1.300 8.800c0-4.100 4.200-7.300 9.200-7.300zM21.500 14c1.500.8 2.300 2 2.300 3.500 0 1.400-.7 2.500-1.800 3.300 0 1 .3 1.700 1 2.500-1.300-.1-2.300-.6-3-1.500-3.500.3-6-1-6.800-3.300" c="#8b9aa8" s={1.8} />
            <span>Public Chat</span>
          </SideItem>
          <SectionTitle $mt={12}>NOTES</SectionTitle>
          <SideItem $mt={9}>
            <Line w={25} h={27} d="M1 6.500q0-1.300 1.300-1.300h8l4.700 4.600v13.400q0 1.300-1.300 1.300H2.300Q1 24.500 1 23.200zM10.300 5.200v4.600H15M6 5V2.300Q6 1 7.300 1h8L20 5.600v13.600q0 1.300-1.300 1.300H15.200M15.300 1v4.600H20" c="#8b9aa8" s={1.6} />
            <span>Shared Notes</span>
          </SideItem>
          <SectionTitle $mt={10}>USERS (1)<Gear /></SectionTitle>
          <UserRow>
            <Avatar>Tn
              <PresenterBadge><svg width="10" height="9" viewBox="0 0 10 9"><rect x="1" y="1" width="8" height="5" fill="none" stroke="#fff" strokeWidth="1.200" /><path d="M3 8.300L5 6.500l2 1.800" stroke="#fff" fill="none" /></svg></PresenterBadge>
            </Avatar>
            <span>tnougosso <em>(You)</em></span>
          </UserRow>
        </Sidebar>

        <Chat>
          <ChatHeader>
            <Line w={7} h={11} d="M6 .8L1 5.500l5 4.700" c="#06172a" s={1.3} />
            <span>Public Chat</span>
            <Kebab c="#06172a" />
          </ChatHeader>
          <Messages>
            <Message>
              Welcome to <b>Salle d’Accueil</b>!<br /><br />
              For help on using Jione-For-Us see these (short)<br /><u>tutorial videos</u>.<br /><br />
              To join the audio bridge click the phone button.<br />Use a headset to avoid causing background<br />noise for others.<br /><br />
              This server is running <u>Jione-For-Us</u>.
            </Message>
            <Message>To invite someone to the meeting, send them<br />this link:<br />https://live.jione.ca/j/tno-g0h-nvr-dii</Message>
          </Messages>
          <ChatForm>
            <ChatInput>Send message to Public Chat</ChatInput>
            <Round $size={35} $bg="#0f70d7"><Line w={18} h={14} d="M1.500 1l15 6-15 6 3-6z" c="#fff" s={1.2} /></Round>
          </ChatForm>
        </Chat>

        <Main>
          <TopBar>
            <Line w={21} h={16} d="M4 4L1.200 7.500L4 11M10 5.200a3.600 4.200 0 0 1 7.400 0a3.600 4.200 0 0 1-7.400 0zM7 14.800q0-4.300 4.200-5.500M20 14.800q0-4.300-4.100-5.500M7 14.900h13" c="#fff" s={1.3} />
            <MeetingTitle>Salle d’Accueil</MeetingTitle>
            <Divider />
            <RecordButton>
              <svg width="17" height="17" viewBox="0 0 17 17"><circle cx="8.500" cy="8.500" r="7.700" fill="none" stroke="#fff" /><circle cx="8.500" cy="8.500" r="4" fill="#fff" /></svg>
              <span>Start recording</span>
            </RecordButton>
            <TopEnd>
              <Round $size={31} $bg="#008081">
                <svg width="15" height="15" viewBox="0 0 15 15" fill="#fff"><path d="M0 12h3v3H0zM4 8h3v7H4zM8 4h3v11H8z" /><path opacity=".5" d="M12 1h3v14h-3z" /></svg>
              </Round>
              <Kebab c="#fff" h={16} />
            </TopEnd>
          </TopBar>

          <Presentation>
            <SlideHeader>
              <Logo />
              <SiteLink>www.jione.ca</SiteLink>
            </SlideHeader>
            <Features>
              <FeaturesTitle>Some Features</FeaturesTitle>
              <FeatureGrid>
                {features.map((f, i) => (
                  <FeatureCell key={i}>
                    {f.name && <>
                      <FeatureIcon>{f.icon}</FeatureIcon>
                      <FeatureName>{f.name}</FeatureName>
                      {f.lines!.map(l => <div key={l}>{l}</div>)}
                    </>}
                  </FeatureCell>
                ))}
              </FeatureGrid>
            </Features>
            <Footer>
              <div>
                <FooterTitle $h={29}>Follow us</FooterTitle>
                <Social><div><PiFacebookLogoBold size={24} /><PiLinkedinLogoBold size={24} /></div><span>@ireturnexperience</span></Social>
              </div>
              <div>
                <FooterTitle $h={25}>Contact us</FooterTitle>
                <Contact $size={11}><FaWhatsapp size={18} /><span>+1 514 826 9580</span></Contact>
                <Contact $size={10.6}>
                  <svg width="20" height="13" viewBox="0 0 20 13"><path fill="#eef2f6" d="M1 .5h18v12H1z" /><path d="M1 1.500l9 6.500 9-6.500" fill="none" stroke="#2f70d4" strokeWidth="1.500" /></svg>
                  <span>contact-irex@aretex.ca</span>
                </Contact>
              </div>
            </Footer>
            <MinimizeButton><Line w={12} h={2} d="M1 1h10" c="#fff" s={1.1} /></MinimizeButton>
            <Tools>
              <Tool><Palm h={25} /><Corner /></Tool>
              <Tool><Line w={22} h={26} d="M7 1L2 6l6 4.500M2.500 6.200c9-1.500 17 1 17 9.300 0 5-3.500 8.500-8 9" s={1.7} /></Tool>
              <Tool><Line w={24} h={26} d="M1 5h22M3.500 5.500v17.200q0 1.800 1.800 1.800h13.400q1.800 0 1.800-1.800V5.500M8 4.500V2.800Q8 1.500 9.300 1.500h5.400q1.300 0 1.300 1.300v1.700M8.200 9.500v11M12 9.500v11M15.800 9.500v11" s={1.6} /></Tool>
              <Tool><PointerIcon><PiHandPointing size={21} /><Line w={18} h={8} d="M1 4.500C3 1 6 .5 9 2.500s5 1.500 8-.5" s={1.3} /></PointerIcon></Tool>
              <Tool><Line w={26} h={22} d="M1.800 1h22.400q.8 0 .8.800v18.400q0 .8-.8.800H1.800q-.8 0-.8-.8V1.800Q1 1 1.800 1zM4.500 15c2-3 3.500-5.500 5.500-5.500s2 2.500 4 2.500 3.500-3 7-5" s={1.6} /></Tool>
            </Tools>
          </Presentation>

          <SlideBar>
            <Line w={8} h={15} d="M7 1L1.500 7.500L7 14" c="#6a7684" s={1.2} />
            <SlideLabel>Slide 1</SlideLabel>
            <Line w={9} h={6} d="M1 1l3.500 3.700L8 1" c="#06172a" s={1.5} />
            <NextWrap><Line w={8} h={15} d="M1 1l5.500 6.500L1 14" c="#27333f" s={1.2} /></NextWrap>
            <Zoom>
              <Line w={18} h={18} d="M9 1.200a7.800 7.800 0 1 0 .01 0zM5 9h8" c="#596673" s={1.1} />
              <span>100%</span>
              <Line w={18} h={18} d="M9 1.200a7.800 7.800 0 1 0 .01 0zM5 9h8M9 5v8" s={1.2} />
              <FitWrap><Line w={18} h={8} d="M1 4h16M4 1L1 4l3 3M14 1l3 3-3 3" s={1.2} /></FitWrap>
              <Line w={16} h={16} d="M1.200 5V1.200H5M1.500 1.500l4 4M11 1.200h3.800V5M14.500 1.500l-4 4M1.200 11v3.800H5M1.500 14.500l4-4M14.800 11v3.800H11M14.500 14.500l-4-4" c="#06172a" s={1.5} />
            </Zoom>
          </SlideBar>

          <ActionBar>
            <ActionGroup><Round $size={42} $bg="#0f70d7"><Line w={20} h={20} d="M10 1v18M1 10h18" c="#fff" s={1.5} /></Round></ActionGroup>
            <ActionGroup>
              <Round $size={42} $ring><Line w={18} h={18} d="M16.500 1.500L2.500 16.500M3 2.500c1.500-1.800 4-1 4.200 1 .1 1.500-1 2-.5 3.300C7.500 9 9.500 11 11.500 11.700c1.200.3 1.800-.9 3.200-.6 2 .5 2.300 2.900.6 4.200-2.300 1.700-6-.5-7.500-2M5 10.200C3 8 1.500 4.500 3 2.500" c="#fff" s={1.6} /></Round>
              <Round $size={42} $ring><Line w={21} h={18} d="M2 3h12v12H2zM14.500 8l4.500-3v8.500L14.500 10.500M16.500 1L4 17" c="#fff" s={1.5} /></Round>
              <Round $size={42} $ring><Line w={18} h={18} d="M1.500 2.500h14.500v11.500H1.500zM5.500 16.500h7.500M16.500 1L2 16" c="#fff" s={1.3} /></Round>
            </ActionGroup>
            <ActionGroup $end><Round $size={42} $ring><Palm h={19} /></Round></ActionGroup>
          </ActionBar>
        </Main>

        <Overlay>
          <Modal>
            <ModalHeader><Line w={15} h={15} d="M1 1l13 13M14 1L1 14" c="#4e5a66" s={1.5} /></ModalHeader>
            <Question>This is a private echo test. Speak a few words. Did you hear audio?</Question>
            <Answers>
              <Answer><Round $size={101} $bg="#008081"><Thumb /></Round><span>Yes</span></Answer>
              <Answer><Round $size={101} $bg="#df2721"><Thumb down /></Round><span>No</span></Answer>
            </Answers>
          </Modal>
        </Overlay>
      </Client>

      <Taskbar>
        {tasks.map((t, i) => <TaskItem key={i} $state={t.state}>{t.icon}{t.badge}</TaskItem>)}
      </Taskbar>
    </Screen>
  );
}
